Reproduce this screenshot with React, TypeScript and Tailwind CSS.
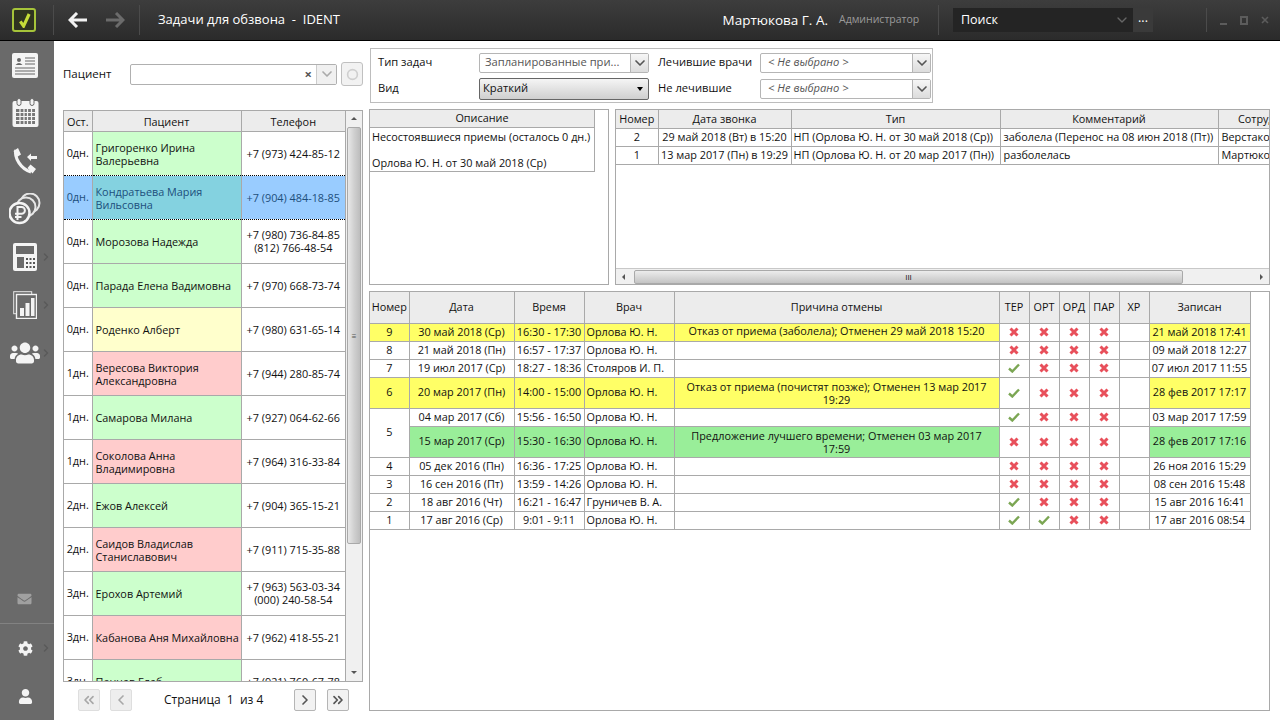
import React from 'react';
import { FaCog, FaEnvelope, FaUser, FaUsers } from 'react-icons/fa';
import { ChevronDown, ChevronLeft, ChevronRight, ChevronsLeft, ChevronsRight, ChevronDown as Down } from 'lucide-react';

type Patient = { left: string; name: string; phone: string[]; color: string; selected?: boolean };

const patients: Patient[] = [
  { left: '0дн.', name: 'Григоренко Ирина Валерьевна', phone: ['+7 (973) 424-85-12'], color: 'bg-[#ccffcc]' },
  { left: '0дн.', name: 'Кондратьева Мария Вильсовна', phone: ['+7 (904) 484-18-85'], color: 'bg-[#84d2e0]', selected: true },
  { left: '0дн.', name: 'Морозова Надежда', phone: ['+7 (980) 736-84-85', '(812) 766-48-54'], color: 'bg-[#ccffcc]' },
  { left: '0дн.', name: 'Парада Елена Вадимовна', phone: ['+7 (970) 668-73-74'], color: 'bg-[#ccffcc]' },
  { left: '0дн.', name: 'Роденко Алберт', phone: ['+7 (980) 631-65-14'], color: 'bg-[#ffffcc]' },
  { left: '1дн.', name: 'Вересова Виктория Александровна', phone: ['+7 (944) 280-85-74'], color: 'bg-[#ffcccc]' },
  { left: '1дн.', name: 'Самарова Милана', phone: ['+7 (927) 064-62-66'], color: 'bg-[#ccffcc]' },
  { left: '1дн.', name: 'Соколова Анна Владимировна', phone: ['+7 (964) 316-33-84'], color: 'bg-[#ffcccc]' },
  { left: '2дн.', name: 'Ежов Алексей', phone: ['+7 (904) 365-15-21'], color: 'bg-[#ccffcc]' },
  { left: '2дн.', name: 'Саидов Владислав Станиславович', phone: ['+7 (911) 715-35-88'], color: 'bg-[#ffcccc]' },
  { left: '3дн.', name: 'Ерохов Артемий', phone: ['+7 (963) 563-03-34', '(000) 240-58-54'], color: 'bg-[#ccffcc]' },
  { left: '3дн.', name: 'Кабанова Аня Михайловна', phone: ['+7 (962) 418-55-21'], color: 'bg-[#ffcccc]' },
  { left: '3дн.', name: 'Панчев Глеб', phone: ['+7 (921) 760-67-78'], color: 'bg-[#ccffcc]' },
];

type Visit = {
  num?: string; span?: number; date: string; time: string; doctor: string; reason: string;
  marks: string; rec: string; tone?: 'y' | 'g'; tall?: boolean;
};

const visits: Visit[] = [
  { num: '9', date: '30 май 2018 (Ср)', time: '16:30 - 17:30', doctor: 'Орлова Ю. Н.', reason: 'Отказ от приема (заболела); Отменен 29 май 2018 15:20', marks: 'xxxx', rec: '21 май 2018 17:41', tone: 'y' },
  { num: '8', date: '21 май 2018 (Пн)', time: '16:57 - 17:37', doctor: 'Орлова Ю. Н.', reason: '', marks: 'xxxx', rec: '09 май 2018 12:27' },
  { num: '7', date: '19 июл 2017 (Ср)', time: '18:27 - 18:36', doctor: 'Столяров И. П.', reason: '', marks: 'vxxx', rec: '07 июл 2017 11:55' },
  { num: '6', date: '20 мар 2017 (Пн)', time: '14:00 - 15:00', doctor: 'Орлова Ю. Н.', reason: 'Отказ от приема (почистят позже); Отменен 13 мар 2017 19:29', marks: 'vxxx', rec: '28 фев 2017 17:17', tone: 'y', tall: true },
  { num: '5', span: 2, date: '04 мар 2017 (Сб)', time: '15:56 - 16:50', doctor: 'Орлова Ю. Н.', reason: '', marks: 'vxxx', rec: '03 мар 2017 17:59' },
  { date: '15 мар 2017 (Ср)', time: '15:30 - 16:30', doctor: 'Орлова Ю. Н.', reason: 'Предложение лучшего времени; Отменен 03 мар 2017 17:59', marks: 'xxxx', rec: '28 фев 2017 17:16', tone: 'g', tall: true },
  { num: '4', date: '05 дек 2016 (Пн)', time: '16:36 - 17:25', doctor: 'Орлова Ю. Н.', reason: '', marks: 'xxxx', rec: '26 ноя 2016 15:29' },
  { num: '3', date: '16 сен 2016 (Пт)', time: '13:59 - 14:26', doctor: 'Орлова Ю. Н.', reason: '', marks: 'xxxx', rec: '08 сен 2016 15:48' },
  { num: '2', date: '18 авг 2016 (Чт)', time: '16:21 - 16:47', doctor: 'Груничев В. А.', reason: '', marks: 'vxxx', rec: '15 авг 2016 16:41' },
  { num: '1', date: '17 авг 2016 (Ср)', time: '9:01 - 9:11', doctor: 'Орлова Ю. Н.', reason: '', marks: 'vvxx', rec: '17 авг 2016 08:54' },
];

const cell = 'border border-[#a9a9a9] p-0 text-center font-normal overflow-hidden';
const head = 'border border-[#a9a9a9] p-0 text-center font-normal bg-[#ececec]';

const Mark = ({ type }: { type: string }) =>
  type === 'v' ? (
    <svg viewBox="0 0 12 10" className="mx-auto h-[10px] w-[12px]">
      <path d="M1 5.5 L4.3 8.5 L11 1.5" fill="none" stroke="#7ba653" strokeWidth="2.4" />
    </svg>
  ) : (
    <svg viewBox="0 0 10 10" className="mx-auto h-[10px] w-[10px]">
      <path d="M1.5 1.5 L8.5 8.5 M8.5 1.5 L1.5 8.5" fill="none" stroke="#e8505b" strokeWidth="3" />
    </svg>
  );

const ComboArrow = () => (
  <span className="flex h-full w-[18px] shrink-0 items-center justify-center border-l border-[#b5b5b5] bg-gradient-to-b from-[#f6f6f6] to-[#dcdcdc]">
    <Down className="h-4 w-4 text-[#555555]" strokeWidth={2.5} />
  </span>
);

const Combo = ({ text, italic, width }: { text: string; italic?: boolean; width: string }) => (
  <div className={`flex h-[20px] items-center rounded-[2px] border border-[#b5b5b5] bg-white pl-[5px] text-[#555555] ${width}`}>
    <span className={`flex-1 whitespace-nowrap ${italic ? 'pl-[2px] italic' : ''}`}>{text}</span>
    <ComboArrow />
  </div>
);

const SideSlot = ({ children, more }: { children: React.ReactNode; more?: boolean }) => (
  <div className="flex h-[48px] shrink-0 items-center pl-[9px]">
    <div className="flex w-[32px] justify-center">{children}</div>
    {more && <ChevronRight className="ml-[-1px] h-3 w-3 text-[#5a5a5a]" strokeWidth={3} />}
  </div>
);

const Sidebar = () => (
  <div className="flex w-[54px] shrink-0 flex-col bg-[#6a6a6a]">
    <SideSlot>
      <svg viewBox="0 0 26 25" className="h-[25px] w-[26px]">
        <rect width="26" height="25" rx="2" fill="#f4f4f4" />
        <circle cx="7" cy="7" r="2" fill="#666666" />
        <path d="M3.5 12 q3.5 -4 7 0 z" fill="#666666" />
        <path d="M13 5h10M13 8h10M13 11h10M3 15h20M3 18h20M3 21h20" stroke="#666666" strokeWidth="1" />
      </svg>
    </SideSlot>
    <SideSlot>
      <svg viewBox="0 0 27 30" className="h-[30px] w-[27px]">
        <rect x="0.5" y="3" width="26" height="26" rx="2" fill="#f4f4f4" />
        <rect x="4" y="11" width="19" height="15" fill="#777777" />
        <path d="M8 11v15M12 11v15M15.5 11v15M19.5 11v15M4 14.5h19M4 18.5h19M4 22.5h19" stroke="#f4f4f4" strokeWidth="1.2" />
        <rect x="5" y="0.5" width="4" height="7" rx="2" fill="#f4f4f4" stroke="#6a6a6a" />
        <rect x="18" y="0.5" width="4" height="7" rx="2" fill="#f4f4f4" stroke="#6a6a6a" />
      </svg>
    </SideSlot>
    <SideSlot>
      <svg viewBox="0 0 26 28" className="h-[28px] w-[26px]">
        <path d="M4 3 C2 11 9 22 19 25" fill="none" stroke="#f4f4f4" strokeWidth="3.2" />
        <path d="M1.500 4 L6 1 L9 7.500 L5 10 Z M15.500 21 L18.500 17.500 L24 22 L20.500 26.500 Z" fill="#f4f4f4" />
        <path d="M15 10 L19 6.500 V9 H25 V12 H19 V14 Z" fill="#f4f4f4" />
      </svg>
    </SideSlot>
    <SideSlot>
      <svg viewBox="0 0 32 32" className="h-[32px] w-[32px]">
        <circle cx="21" cy="10" r="9.500" fill="none" stroke="#e6e6e6" strokeWidth="2" />
        <circle cx="17" cy="14" r="9.500" fill="#6a6a6a" stroke="#e6e6e6" strokeWidth="2" />
        <circle cx="10.500" cy="20" r="10" fill="#6a6a6a" stroke="#f4f4f4" strokeWidth="2.500" />
        <path d="M8.500 27V14h4a3.200 3.200 0 0 1 0 6.800H6M6 24h6.500" fill="none" stroke="#f4f4f4" strokeWidth="2" />
      </svg>
    </SideSlot>
    <SideSlot more>
      <svg viewBox="0 0 24 28" className="h-[28px] w-[24px]">
        <rect width="24" height="28" rx="2" fill="#f4f4f4" />
        <rect x="3" y="3" width="18" height="8" fill="#6a6a6a" />
        <rect x="4" y="14" width="7" height="11" fill="#6a6a6a" />
        <path d="M13 15h2v2h-2zM16.500 15h2v2h-2zM20 15h2v2h-2zM13 19h2v2h-2zM16.500 19h2v2h-2zM20 19h2v2h-2zM13 23h2v2h-2zM16.500 23h2v2h-2zM20 23h2v2h-2z" fill="#555555" />
      </svg>
    </SideSlot>
    <SideSlot more>
      <svg viewBox="0 0 24 28" className="h-[28px] w-[24px]">
        <rect x="0.700" y="0.700" width="18" height="22" fill="none" stroke="#e8e8e8" strokeWidth="1" />
        <rect x="3.500" y="3.500" width="20" height="24" fill="#6a6a6a" stroke="#f4f4f4" strokeWidth="1.400" />
        <path d="M7 17h4v8H7zM12.500 12h4v13h-4zM18 7h3.500v18H18z" fill="#f4f4f4" />
      </svg>
    </SideSlot>
    <SideSlot more>
      <FaUsers className="h-[30px] w-[30px] text-[#f4f4f4]" />
    </SideSlot>
    <div className="mt-auto flex h-[50px] items-end justify-center pb-[17px] pr-[6px]">
      <FaEnvelope className="h-[14px] w-[15px] text-[#a0a0a0]" />
    </div>
    <div className="border-t border-[#828282]">
      <SideSlot more>
        <FaCog className="h-[15px] w-[15px] text-[#f4f4f4]" />
      </SideSlot>
      <SideSlot>
        <FaUser className="h-[15px] w-[15px] text-[#f4f4f4]" />
      </SideSlot>
    </div>
  </div>
);

const TopBar = () => (
  <div className="flex h-[41px] shrink-0 items-center border-b border-black bg-gradient-to-b from-[#3d3d3d] to-[#2b2b2b] text-white">
    <div className="ml-[12px] flex h-[24px] w-[24px] items-center justify-center rounded-[3px] border-2 border-[#a6c43a] bg-[#2f3320]">
      <svg viewBox="0 0 14 16" className="h-[15px] w-[13px]">
        <path d="M2.500 9 L6 14 L12 1" fill="none" stroke="#c6dc38" strokeWidth="3.400" />
      </svg>
    </div>
    <div className="ml-[17px] h-[30px] w-px bg-[#4b4b4b]" />
    <svg viewBox="0 0 20 16" className="ml-[14px] h-[16px] w-[20px]">
      <path d="M9 1 L2 8 L9 15 M2 8 H19" fill="none" stroke="#f2f2f2" strokeWidth="3" />
    </svg>
    <svg viewBox="0 0 20 16" className="ml-[17px] h-[16px] w-[20px]">
      <path d="M11 1 L18 8 L11 15 M18 8 H1" fill="none" stroke="#6b6b6b" strokeWidth="3" />
    </svg>
    <div className="ml-[14px] h-[30px] w-px bg-[#4b4b4b]" />
    <div className="ml-[18px] text-[13px]">Задачи для обзвона&nbsp; -&nbsp; IDENT</div>
    <div className="ml-auto text-[13.500px]">Мартюкова Г. А.</div>
    <div className="ml-[11px] w-[79px] whitespace-nowrap text-[10.500px] text-[#9a9a9a]">Администратор</div>
    <div className="ml-[20px] h-[30px] w-px bg-[#4b4b4b]" />
    <div className="ml-[14px] flex h-[24px] w-[200px] items-center bg-[#242424] text-[12.500px]">
      <span className="ml-[8px] flex-1">Поиск</span>
      <ChevronDown className="h-4 w-4 text-[#666666]" />
      <span className="ml-[3px] flex h-full w-[20px] items-center justify-center bg-[#3a3a3a] pb-[4px]">...</span>
    </div>
    <div className="ml-[53px] h-[24px] w-px bg-[#4b4b4b]" />
    <div className="ml-[13px] flex items-center gap-[13px] pr-[11px]">
      <span className="mt-[8px] h-[2px] w-[7px] bg-[#5c5c5c]" />
      <span className="h-[9px] w-[8px] border-2 border-[#5c5c5c]" />
      <svg viewBox="0 0 8 8" className="h-[8px] w-[8px]">
        <path d="M1 1L7 7M7 1L1 7" stroke="#5c5c5c" strokeWidth="1.600" />
      </svg>
    </div>
  </div>
);

const PagerButton = ({ children, off }: { children: React.ReactNode; off?: boolean }) => (
  <div className={`flex h-[22px] w-[22px] items-center justify-center rounded-[2px] border ${off ? 'border-[#dedede] bg-[#eeeeee] text-[#a8a8a8]' : 'border-[#b5b5b5] bg-[#f2f2f2] text-[#555555]'}`}>
    {children}
  </div>
);

const LeftPanel = () => (
  <div className="flex w-[300px] shrink-0 flex-col">
    <div className="flex h-[66px] items-center">
      <span className="w-[67px] text-[11.500px]">Пациент</span>
      <div className="flex h-[21px] w-[207px] items-center rounded-[2px] border border-[#b0b0b0] bg-white">
        <span className="ml-auto mr-[4px] text-[13px] font-bold leading-none text-[#555555]">×</span>
        <span className="flex h-full w-[20px] items-center justify-center border-l border-[#cccccc] bg-[#f0f0f0]">
          <Down className="h-4 w-4 text-[#aaaaaa]" strokeWidth={2.5} />
        </span>
      </div>
      <div className="ml-[4px] flex h-[24px] w-[22px] items-center justify-center rounded-[3px] border border-[#c0c0c0] bg-[#f2f2f2]">
        <svg viewBox="0 0 12 12" className="h-[13px] w-[13px]">
          <circle cx="6" cy="6" r="4.500" fill="none" stroke="#cfcfcf" strokeWidth="1.500" />
        </svg>
      </div>
    </div>
    <div className="mt-[3px] flex h-[572px] border border-[#a9a9a9]">
      <div className="h-full w-[281px] overflow-hidden">
        <table className="w-full table-fixed border-collapse">
          <colgroup>
            <col className="w-[28px]" />
            <col className="w-[149px]" />
            <col className="w-[104px]" />
          </colgroup>
          <thead>
            <tr className="h-[20px]">
              <th className={`${head} border-t-0 border-l-0 pt-[2px]`}>Ост.</th>
              <th className={`${head} border-t-0 pt-[2px]`}>Пациент</th>
              <th className={`${head} border-t-0 border-r-0 pt-[2px]`}>Телефон</th>
            </tr>
          </thead>
          <tbody>
            {patients.map((p, i) => {
              const side = p.selected ? 'bg-[#99ccff] text-[#1d4f7c]' : 'bg-white';
              const edge = p.selected
                ? '[border-top-style:dotted] [border-bottom-style:dotted] border-y-black'
                : i === 0 ? 'border-b-0' : i === 2 ? 'border-t-0' : '';
              return (
                <tr key={p.name} className="h-[44px]">
                  <td className={`${cell} border-l-0 ${side} ${edge}`}>{p.left}</td>
                  <td className={`${cell} ${p.color} pl-[3px] pt-[1px] text-left leading-[13px] ${p.selected ? 'text-[#1d4f7c]' : ''} ${edge}`}>{p.name}</td>
                  <td className={`${cell} border-r-0 leading-[13px] ${side} ${edge}`}>
                    {p.phone.map((n) => <div key={n}>{n}</div>)}
                  </td>
                </tr>
              );
            })}
          </tbody>
        </table>
      </div>
      <div className="flex h-full flex-1 flex-col items-center border-l border-[#a9a9a9] bg-[#f0f0f0] text-[#555555]">
        <span className="mt-[6px] h-0 w-0 border-x-[3px] border-b-[3px] border-x-transparent border-b-[#555555]" />
        <div className="mt-[7px] flex h-[417px] w-[14px] items-center justify-center rounded-[2px] border border-[#a9a9a9] bg-gradient-to-r from-[#e8e8e8] via-[#d0d0d0] to-[#bdbdbd]">
          <span className="text-[8px] leading-none">≡</span>
        </div>
        <span className="mb-[7px] mt-auto h-0 w-0 border-x-[3px] border-t-[3px] border-x-transparent border-t-[#555555]" />
      </div>
    </div>
    <div className="mt-[7px] flex items-center pl-[15px]">
      <PagerButton off><ChevronsLeft className="h-4 w-4" strokeWidth={2.500} /></PagerButton>
      <div className="ml-[10px]"><PagerButton off><ChevronLeft className="h-4 w-4" strokeWidth={2.500} /></PagerButton></div>
      <span className="w-[162px] pl-[32px] text-[12px]">Страница&nbsp; 1&nbsp; из 4</span>
      <PagerButton><ChevronRight className="h-4 w-4" strokeWidth={2.500} /></PagerButton>
      <div className="ml-[11px]"><PagerButton><ChevronsRight className="h-4 w-4" strokeWidth={2.500} /></PagerButton></div>
    </div>
  </div>
);

const Filters = () => (
  <div className="ml-px mt-[7px] grid h-[55px] w-[563px] grid-cols-[101px_170px_9px_102px_171px] items-center border border-[#bdbdbd] pl-[7px] pt-[1px] text-[11.200px]">
    <span>Тип задач</span>
    <Combo text="Запланированные при..." width="w-[170px]" />
    <span />
    <span>Лечившие врачи</span>
    <Combo text="< Не выбрано >" italic width="w-[171px]" />
    <span>Вид</span>
    <div className="flex h-[22px] w-[170px] items-center rounded-[2px] border border-[#666666] bg-gradient-to-b from-[#f5f5f5] to-[#cfcfcf] pl-[3px] pr-[5px]">
      <span className="flex-1">Краткий</span>
      <span className="h-0 w-0 border-x-[3px] border-t-[4px] border-x-transparent border-t-black" />
    </div>
    <span />
    <span>Не лечившие</span>
    <Combo text="< Не выбрано >" italic width="w-[171px]" />
  </div>
);

const calls = [
  ['2', '29 май 2018 (Вт) в 15:20', 'НП (Орлова Ю. Н. от 30 май 2018 (Ср))', 'заболела (Перенос на 08 июн 2018 (Пт))', 'Верстакова Е. В.'],
  ['1', '13 мар 2017 (Пн) в 19:29', 'НП (Орлова Ю. Н. от 20 мар 2017 (Пн))', 'разболелась', 'Мартюкова Г. А.'],
];

const Middle = () => (
  <div className="mt-[6px] flex h-[176px] gap-[6px]">
    <div className="w-[240px] border border-[#a9a9a9]">
      <div className="w-[225px] border-r border-b border-[#a9a9a9]">
        <div className="flex h-[18px] items-center justify-center border-b border-[#a9a9a9] bg-[#ececec]">Описание</div>
        <div className="flex h-[43px] flex-col justify-between whitespace-nowrap px-[2px] py-[1px] leading-[15px]">
          <div>Несостоявшиеся приемы (осталось 0 дн.)</div>
          <div>Орлова Ю. Н. от 30 май 2018 (Ср)</div>
        </div>
      </div>
    </div>
    <div className="flex w-[655px] flex-col border border-[#a9a9a9]">
      <div className="flex-1 overflow-hidden">
        <table className="w-[698px] table-fixed border-collapse">
          <colgroup>
            <col className="w-[42px]" />
            <col className="w-[133px]" />
            <col className="w-[209px]" />
            <col className="w-[218px]" />
            <col className="w-[96px]" />
          </colgroup>
          <thead>
            <tr className="h-[18px]">
              {['Номер', 'Дата звонка', 'Тип', 'Комментарий', 'Сотрудник'].map((h, i) => (
                <th key={h} className={`${head} border-t-0 ${i === 0 ? 'border-l-0' : ''}`}>{h}</th>
              ))}
            </tr>
          </thead>
          <tbody>
            {calls.map((c) => (
              <tr key={c[0]} className="h-[18px]">
                <td className={`${cell} border-l-0`}>{c[0]}</td>
                <td className={`${cell} whitespace-nowrap`}>{c[1]}</td>
                <td className={`${cell} whitespace-nowrap px-[2px] text-left`}>{c[2]}</td>
                <td className={`${cell} whitespace-nowrap px-[3px] text-left`}>{c[3]}</td>
                <td className={`${cell} whitespace-nowrap px-[3px] text-left`}>{c[4]}</td>
              </tr>
            ))}
          </tbody>
        </table>
      </div>
      <div className="flex h-[16px] items-center border-t border-[#c8c8c8] bg-[#f0f0f0]">
        <span className="ml-[6px] h-0 w-0 border-y-[3px] border-r-[3px] border-y-transparent border-r-[#555555]" />
        <div className="ml-[9px] flex h-[14px] w-[549px] items-center justify-center rounded-[2px] border border-[#a9a9a9] bg-gradient-to-b from-[#ececec] to-[#c4c4c4]">
          <span className="text-[8px] leading-none">III</span>
        </div>
        <span className="ml-auto mr-[6px] h-0 w-0 border-y-[3px] border-l-[3px] border-y-transparent border-l-[#555555]" />
      </div>
    </div>
  </div>
);

const Visits = () => (
  <div className="mt-[6px] h-[420px] w-[901px] border border-[#a9a9a9]">
    <table className="w-[880px] table-fixed border-collapse">
      <colgroup>
        <col className="w-[39px]" />
        <col className="w-[105px]" />
        <col className="w-[70px]" />
        <col className="w-[90px]" />
        <col className="w-[325px]" />
        <col className="w-[30px]" />
        <col className="w-[30px]" />
        <col className="w-[30px]" />
        <col className="w-[30px]" />
        <col className="w-[30px]" />
        <col className="w-[101px]" />
      </colgroup>
      <thead>
        <tr className="h-[31px]">
          {['Номер', 'Дата', 'Время', 'Врач', 'Причина отмены', 'ТЕР', 'ОРТ', 'ОРД', 'ПАР', 'ХР', 'Записан'].map((h, i) => (
            <th key={h} className={`${head} border-t-0 ${i === 0 ? 'border-l-0' : ''}`}>{h}</th>
          ))}
        </tr>
      </thead>
      <tbody>
        {visits.map((v) => {
          const bg = v.tone === 'y' ? 'bg-[#ffff66]' : v.tone === 'g' ? 'bg-[#99ee99]' : '';
          return (
            <tr key={v.date} className={v.tall ? 'h-[31px]' : 'h-[18px]'}>
              {v.num && <td rowSpan={v.span} className={`${cell} border-l-0 ${bg}`}>{v.num}</td>}
              <td className={`${cell} whitespace-nowrap ${bg}`}>{v.date}</td>
              <td className={`${cell} whitespace-nowrap ${bg}`}>{v.time}</td>
              <td className={`${cell} whitespace-nowrap px-[2px] text-left ${bg}`}>{v.doctor}</td>
              <td className={`${cell} px-[8px] align-top leading-[13px] ${v.tall ? 'pt-[2px]' : 'align-middle'} ${bg}`}>{v.reason}</td>
              {v.marks.split('').map((m, i) => (
                <td key={i} className={cell}><Mark type={m} /></td>
              ))}
              <td className={cell} />
              <td className={`${cell} whitespace-nowrap ${bg}`}>{v.rec}</td>
            </tr>
          );
        })}
      </tbody>
    </table>
  </div>
);

export default function App() {
  return (
    <div className="flex h-[720px] w-[1280px] flex-col overflow-hidden bg-white font-['Open_Sans',sans-serif] text-[10.850px] text-[#111111]">
      <TopBar />
      <div className="flex min-h-0 flex-1">
        <Sidebar />
        <div className="flex min-w-0 flex-1 pl-[9px]">
          <LeftPanel />
          <div className="ml-[6px] flex flex-col">
            <Filters />
            <Middle />
            <Visits />
          </div>
        </div>
      </div>
    </div>
  );
}
